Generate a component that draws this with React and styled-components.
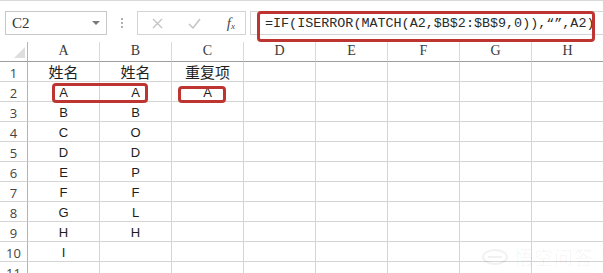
import React from "react";
import styled, { createGlobalStyle } from "styled-components";

const Global = createGlobalStyle`
  html, body { margin: 0; padding: 0; background: #fff; }
  body { width: 603px; height: 273px; overflow: hidden; font-family: "Liberation Sans", "Noto Sans CJK SC", sans-serif; }
`;

const Page = styled.div`
  position: relative;
  width: 603px;
  height: 273px;
  overflow: hidden;
  background: #fff;
`;

const TopBar = styled.div`
  height: 42px;
  box-sizing: border-box;
  border-top: 1px solid #d9d9d9;
  padding-top: 10px;
  display: flex;
  align-items: flex-start;
`;

const NameBox = styled.div`
  margin-left: 5px;
  width: 102px;
  height: 24px;
  box-sizing: border-box;
  border: 1px solid #c8c8c8;
  display: flex;
  align-items: center;
  justify-content: space-between;
  padding: 0 6px 0 6px;
  font-family: "Liberation Serif", serif;
  font-size: 15px;
  color: #333;
`;

const Caret = styled.span`
  width: 0;
  height: 0;
  border-left: 4px solid transparent;
  border-right: 4px solid transparent;
  border-top: 4px solid #7a7a7a;
`;

const Dots = styled.div`
  width: 30px;
  height: 24px;
  display: flex;
  flex-direction: column;
  align-items: center;
  justify-content: center;
  gap: 2px;
  & > span {
    width: 2px;
    height: 2px;
    background: #b0b0b0;
  }
`;

const ButtonBox = styled.div`
  width: 109px;
  height: 24px;
  box-sizing: border-box;
  border: 1px solid #d4d4d4;
  display: flex;
  align-items: center;
  padding: 0 10px 0 14px;
  justify-content: space-between;
`;

const Fx = styled.span`
  font-family: "Liberation Serif", serif;
  font-style: italic;
  font-size: 15px;
  color: #4a4a4a;
  line-height: 1;
  & > sub {
    font-size: 9px;
    vertical-align: baseline;
    position: relative;
    top: 1px;
  }
`;

const FormulaBox = styled.div`
  position: relative;
  margin-left: 4px;
  flex: 1;
  height: 24px;
  box-sizing: border-box;
  border: 1px solid #d4d4d4;
  border-right: none;
  display: flex;
  align-items: center;
  padding-left: 14px;
  font-family: "Liberation Mono", monospace;
  font-size: 13.4px;
  color: #2a2a2a;
  white-space: nowrap;
`;

const FormulaHighlight = styled.div`
  position: absolute;
  left: 6px;
  top: -1px;
  width: 338px;
  height: 31px;
  box-sizing: border-box;
  border: 3px solid #bd3431;
  border-radius: 4px;
`;

const Sheet = styled.div`
  position: relative;
  display: grid;
  grid-template-columns: 28px repeat(8, 72px);
  grid-auto-rows: 20px;
`;

const Corner = styled.div`
  position: relative;
  box-sizing: border-box;
  border-right: 1px solid #b4b4b4;
  border-bottom: 1px solid #9e9e9e;
  &::after {
    content: "";
    position: absolute;
    right: 2px;
    bottom: 3px;
    width: 0;
    height: 0;
    border-left: 11px solid transparent;
    border-bottom: 11px solid #dedede;
  }
`;

const ColHead = styled.div`
  box-sizing: border-box;
  border-right: 1px solid #d9d9d9;
  border-bottom: 1px solid #9e9e9e;
  display: flex;
  align-items: flex-end;
  justify-content: center;
  padding-bottom: 2px;
  font-family: "Liberation Serif", serif;
  font-size: 14px;
  color: #3a3a3a;
`;

const RowHead = styled.div`
  box-sizing: border-box;
  border-right: 1px solid #b4b4b4;
  border-bottom: 1px solid #d4d4d4;
  display: flex;
  align-items: center;
  justify-content: center;
  padding-top: 2px;
  font-family: "Open Sans", "Liberation Sans", sans-serif;
  font-size: 13px;
  color: #444;
`;

const Cell = styled.div`
  box-sizing: border-box;
  border-right: 1px solid #d4d4d4;
  border-bottom: 1px solid #d4d4d4;
  display: flex;
  align-items: center;
  justify-content: center;
  padding-top: ${(p) => (p.$cjk ? "0" : "2px")};
  font-family: ${(p) =>
    p.$cjk ? `"Noto Sans CJK SC", sans-serif` : `"Liberation Sans", sans-serif`};
  font-size: ${(p) => (p.$cjk ? "15px" : "13px")};
  color: #1e1e1e;
  white-space: nowrap;
`;

const RedBox = styled.div`
  position: absolute;
  box-sizing: border-box;
  border: 3px solid #bd3431;
  border-radius: 4px;
  left: ${(p) => p.$x}px;
  top: ${(p) => p.$y}px;
  width: ${(p) => p.$w}px;
  height: ${(p) => p.$h}px;
`;

const Watermark = styled.div`
  position: absolute;
  left: 482px;
  top: 243px;
  display: flex;
  align-items: center;
  gap: 6px;
  font-family: "Noto Sans CJK SC", sans-serif;
  font-size: 19px;
  letter-spacing: 1px;
  color: rgba(0, 0, 0, 0.045);
  pointer-events: none;
`;

const cols = ["A", "B", "C", "D", "E", "F", "G", "H"];
const data = [
  ["姓名", "姓名", "重复项"],
  ["A", "A", "A"],
  ["B", "B", ""],
  ["C", "O", ""],
  ["D", "D", ""],
  ["E", "P", ""],
  ["F", "F", ""],
  ["G", "L", ""],
  ["H", "H", ""],
  ["I", "", ""],
  ["", "", ""],
];

export default function App() {
  return (
    <Page>
      <Global />
      <TopBar>
        <NameBox>
          C2
          <Caret />
        </NameBox>
        <Dots>
          <span />
          <span />
          <span />
        </Dots>
        <ButtonBox>
          <svg width="11" height="11" viewBox="0 0 11 11">
            <path d="M1 1L10 10M10 1L1 10" stroke="#c4c4c4" strokeWidth="1.4" fill="none" />
          </svg>
          <svg width="13" height="11" viewBox="0 0 13 11">
            <path d="M1 6L5 10L12 1" stroke="#c4c4c4" strokeWidth="1.5" fill="none" />
          </svg>
          <Fx>
            f<sub>x</sub>
          </Fx>
        </ButtonBox>
        <FormulaBox>
          =IF(ISERROR(MATCH(A2,$B$2:$B$9,0)),“”,A2)
          <FormulaHighlight />
        </FormulaBox>
      </TopBar>
      <Sheet>
        <Corner />
        {cols.map((c) => (
          <ColHead key={c}>{c}</ColHead>
        ))}
        {data.map((row, i) => (
          <React.Fragment key={i}>
            <RowHead>{i + 1}</RowHead>
            {cols.map((c, j) => (
              <Cell key={c} $cjk={i === 0}>
                {row[j] || ""}
              </Cell>
            ))}
          </React.Fragment>
        ))}
        <RedBox $x={52} $y={41} $w={96} $h={20} />
        <RedBox $x={178} $y={44} $w={48} $h={17} />
      </Sheet>
      <Watermark>
        <svg width="26" height="16" viewBox="0 0 26 16">
          <ellipse cx="13" cy="8" rx="12" ry="7" fill="none" stroke="rgba(0,0,0,0.055)" strokeWidth="2" />
          <path d="M6 8h14" stroke="rgba(0,0,0,0.055)" strokeWidth="2" />
        </svg>
        悟空问答
      </Watermark>
    </Page>
  );
}
